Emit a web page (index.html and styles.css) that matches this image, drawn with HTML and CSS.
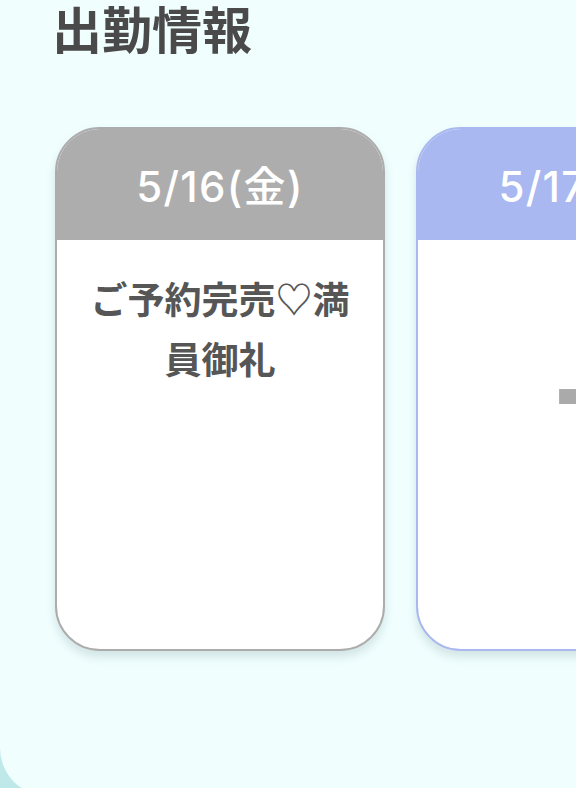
FILE: index.html
```html
<!DOCTYPE html>
<html lang="ja">
<head>
<meta charset="utf-8">
<link rel="stylesheet" href="styles.css">
</head>
<body>
<div class="panel">
  <h2 class="title">出勤情報</h2>
  <div class="cards">
    <div class="card card-gray">
      <div class="card-head">5/16(金)</div>
      <div class="card-body">ご予約完売♡満員御礼</div>
    </div>
    <div class="card card-blue">
      <div class="card-head">5/17(土)</div>
      <div class="card-body"><span class="dash">-</span></div>
    </div>
  </div>
</div>
</body>
</html>
```

FILE: styles.css
```css
html, body {
  margin: 0;
  padding: 0;
}
body {
  width: 576px;
  height: 788px;
  overflow: hidden;
  background: #bfe8e8;
  font-family: "Noto Sans", "Noto Sans CJK JP", sans-serif;
}
.panel {
  height: 796px;
  background: #f0fefe;
  border-bottom-left-radius: 48px;
  padding-left: 55px;
  box-sizing: border-box;
  overflow: hidden;
}
.title {
  margin: 0 0 0 -3px;
  padding-top: 1px;
  height: 127px;
  box-sizing: border-box;
  font-size: 50px;
  line-height: 52px;
  font-weight: 700;
  color: #4a4a4a;
  font-family: "Noto Sans CJK JP", sans-serif;
}
.cards {
  display: flex;
  gap: 31px;
  width: 800px;
}
.card {
  flex: 0 0 auto;
  width: 330px;
  height: 524px;
  box-sizing: border-box;
  border-radius: 45px;
  border: 2px solid;
  overflow: hidden;
  background: #fff;
  display: flex;
  flex-direction: column;
  box-shadow: 0 6px 10px rgba(80, 110, 110, 0.18);
}
.card-gray { border-color: #acacac; }
.card-blue { border-color: #a9b8f0; }
.card-head {
  height: 111px;
  flex: 0 0 auto;
  display: flex;
  align-items: center;
  justify-content: center;
  color: #fff;
  font-size: 42px;
  letter-spacing: 1.3px;
  font-weight: 500;
  font-family: "Inter", "Noto Sans CJK JP", sans-serif;
  padding-bottom: 2px;
  box-sizing: border-box;
}
.card-gray .card-head { background: #adadad; }
.card-blue .card-head { background: #a9b8f0; }
.card-body {
  padding: 28px 20px 0;
  text-align: center;
  font-size: 37px;
  line-height: 60px;
  font-weight: 700;
  color: #565656;
  font-family: "Noto Sans CJK JP", sans-serif;
}
.dash {
  display: inline-block;
  margin-top: 55px;
  margin-right: 12px;
  font-size: 120px;
  line-height: 120px;
  font-weight: 700;
  color: #aaa;
  font-family: "Noto Sans", sans-serif;
}
```
